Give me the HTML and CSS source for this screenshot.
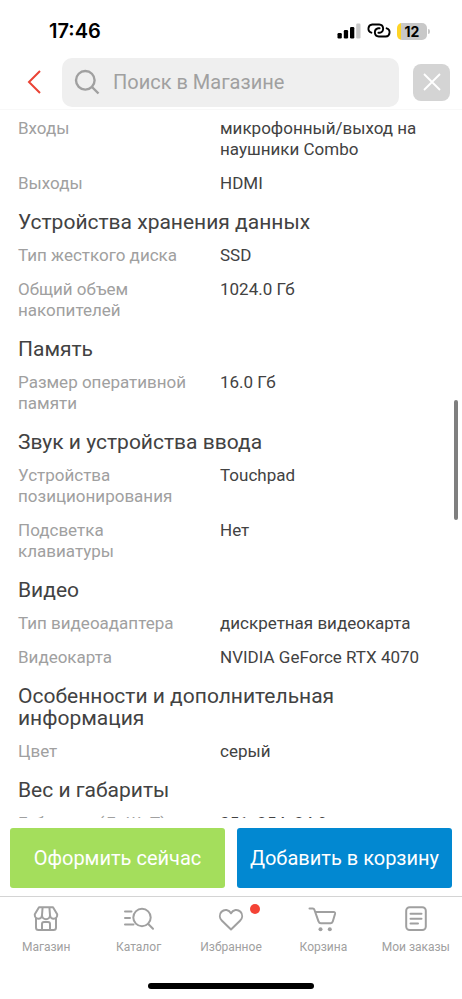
FILE: index.html
```html
<!DOCTYPE html>
<html lang="ru">
<head>
<meta charset="utf-8">
<meta name="viewport" content="width=device-width, initial-scale=1">
<title>Магазин</title>
<link rel="stylesheet" href="styles.css">
</head>
<body>
<div class="status">
  <span class="time">17:46</span>
  <div class="indicators">
    <svg width="24" height="16" viewBox="0 0 24 16" aria-hidden="true">
      <rect x="0.500" y="10" width="4.300" height="5.500" rx="1.200"/><rect x="6.800" y="7" width="4.300" height="8.500" rx="1.200"/><rect x="13" y="4" width="4.300" height="11.500" rx="1.200"/><rect x="19.200" y="0.500" width="4.300" height="15" rx="1.200" fill="#c8c8c8"/>
    </svg>
    <svg width="24" height="16" viewBox="0 0 24 16" fill="none" stroke="#000" stroke-width="1.900" stroke-linecap="round" aria-hidden="true">
      <path d="M4.400 9.700A4.200 4.200 0 0 1 5.300 1.500H12.200A4.200 4.200 0 0 1 12.800 9.800H11.400"/>
      <path d="M19.600 5.300A4.200 4.200 0 0 1 18.700 13.500H11.800A4.200 4.200 0 0 1 11.200 5.200H12.600"/>
    </svg>
    <div class="battery"><span class="level">12</span><span class="tip"></span></div>
  </div>
</div>
<header class="header">
  <button class="back" aria-label="Назад"><svg width="14" height="24" viewBox="0 0 14 24" fill="none" stroke="#ea4335" stroke-width="2"><path d="M13 1L2 12L13 23"/></svg></button>
  <label class="search">
    <svg width="26" height="26" viewBox="0 0 26 26" fill="none" stroke="#a0a0a0" stroke-width="2.400" aria-hidden="true"><circle cx="11.300" cy="11.300" r="9.300"/><path d="M18 18L24.500 24.500"/></svg>
    <input type="text" placeholder="Поиск в Магазине" aria-label="Поиск в Магазине">
  </label>
  <button class="close" aria-label="Закрыть"><svg width="18" height="18" viewBox="0 0 18 18" fill="none" stroke="#fff" stroke-width="1.800"><path d="M1 1L17 17M17 1L1 17"/></svg></button>
</header>
<main class="content">
  <dl class="specs">
    <div class="row"><dt>Входы</dt><dd>микрофонный/выход на наушники Combo</dd></div>
    <div class="row"><dt>Выходы</dt><dd>HDMI</dd></div>
  </dl>
  <h2>Устройства хранения данных</h2>
  <dl class="specs">
    <div class="row"><dt>Тип жесткого диска</dt><dd>SSD</dd></div>
    <div class="row"><dt>Общий объем накопителей</dt><dd>1024.0 Гб</dd></div>
  </dl>
  <h2>Память</h2>
  <dl class="specs">
    <div class="row"><dt>Размер оперативной памяти</dt><dd>16.0 Гб</dd></div>
  </dl>
  <h2>Звук и устройства ввода</h2>
  <dl class="specs">
    <div class="row"><dt>Устройства позиционирования</dt><dd>Touchpad</dd></div>
    <div class="row"><dt>Подсветка клавиатуры</dt><dd>Нет</dd></div>
  </dl>
  <h2>Видео</h2>
  <dl class="specs">
    <div class="row"><dt>Тип видеоадаптера</dt><dd>дискретная видеокарта</dd></div>
    <div class="row"><dt>Видеокарта</dt><dd>NVIDIA GeForce RTX 4070</dd></div>
  </dl>
  <h2>Особенности и дополнительная информация</h2>
  <dl class="specs">
    <div class="row"><dt>Цвет</dt><dd>серый</dd></div>
  </dl>
  <h2>Вес и габариты</h2>
  <dl class="specs">
    <div class="row"><dt>Габариты (ДхШхТ)</dt><dd>351x254x24.9</dd></div>
  </dl>
  <div class="thumb"></div>
</main>
<div class="actions">
  <button class="order">Оформить сейчас</button>
  <button class="add">Добавить в корзину</button>
</div>
<nav class="tabs">
  <a href="#"><svg viewBox="0 0 28 28" aria-hidden="true"><path d="M7 2.200H21L25.200 9.200V10A3.600 3.600 0 0 1 18 10.200A4 4 0 0 1 10 10.200A3.600 3.600 0 0 1 2.800 10V9.200ZM10.600 2.200L10 10.200M17.400 2.200L18 10.200M4 13V22.500Q4 25 6.500 25H21.500Q24 25 24 22.500V13M10 25V19Q10 17 12 17H16Q18 17 18 19V25"/></svg>Магазин</a>
  <a href="#"><svg viewBox="0 0 28 28" aria-hidden="true"><circle cx="17" cy="12.500" r="8.700"/><path d="M23 18.800L28 23.800M0 6.500H6.500M0 13H5M0 19.500H8.500"/></svg>Каталог</a>
  <a href="#"><svg viewBox="0 0 28 28" aria-hidden="true"><path d="M14 24.500L5 15.800C2.500 13.300 2 9.500 4.500 6.800C7.500 3.700 12 4.500 14 8.300C16 4.500 20.500 3.700 23.500 6.800C26 9.500 25.500 13.300 23 15.800Z"/></svg><span class="dot"></span>Избранное</a>
  <a href="#"><svg viewBox="0 0 28 28" aria-hidden="true"><path d="M0.500 3.500H3.800Q5 3.500 5.400 4.700L9.500 16.300Q10.200 18.300 12 18.300H21.500Q23 18.300 23.700 16.700L26 9Q26.500 7 24.500 7H6.200"/><g stroke="none" fill="#a0a0a0"><circle cx="11.500" cy="24.300" r="2"/><circle cx="20.800" cy="24.300" r="2"/></g></svg>Корзина</a>
  <a href="#"><svg viewBox="0 0 28 28" aria-hidden="true"><rect x="4.200" y="2.300" width="19.600" height="22.700" rx="3.500"/><path d="M8.500 8.800H19.500M8.500 13.700H19.500M8.500 18.500H16"/></svg>Мои заказы</a>
</nav>
<div class="home"></div>
</body>
</html>
```
FILE: styles.css
```css
* { box-sizing: border-box; }
body {
  margin: 0;
  height: 100vh;
  display: flex;
  flex-direction: column;
  background: #fff;
  color: #424242;
  font-family: Roboto, sans-serif;
  font-size: 17px;
  line-height: 21px;
}
button { border: 0; padding: 0; font: inherit; background: none; }
svg { display: block; flex: none; }
.status {
  display: flex;
  justify-content: space-between;
  align-items: center;
  height: 58px;
  padding: 4px 32px 0 49px;
  color: #000;
}
.time { font: 600 20px/24px Inter, sans-serif; }
.indicators { display: flex; align-items: center; gap: 6px; }
.battery { display: flex; align-items: center; gap: 1px; }
.level {
  width: 30px;
  border-radius: 5px;
  background: linear-gradient(90deg, #ffd426 4px, #c8c8c8 4px);
  font: 700 14px/17px Inter, sans-serif;
  text-align: center;
}
.tip { width: 2px; height: 5px; border-radius: 0 2px 2px 0; background: #c8c8c8; }
.header {
  display: flex;
  align-items: center;
  gap: 14px;
  height: 52px;
  padding: 0 12px 3px 20px;
  border-bottom: 1px solid #f8f8f8;
}
.back { width: 28px; height: 32px; display: grid; place-items: center; }
.search {
  flex: 1;
  min-width: 0;
  height: 49px;
  display: flex;
  align-items: center;
  gap: 13px;
  padding: 0 12px;
  border-radius: 10px;
  background: #efefef;
}
.search input {
  width: 100%;
  min-width: 0;
  padding: 0;
  border: 0;
  outline: 0;
  background: none;
  font: 20px/24px Roboto, sans-serif;
}
.search input::placeholder { color: #a0a0a0; opacity: 1; }
.close {
  width: 37px;
  height: 37px;
  display: grid;
  place-items: center;
  border-radius: 8px;
  background: #d4d4d4;
}
.content {
  position: relative;
  flex: 1;
  min-height: 0;
  overflow: hidden;
  padding: 8px 18px 0;
}
.specs { margin: 0; display: grid; gap: 13px; }
.row { display: grid; grid-template-columns: 180px 1fr; gap: 22px; }
dt { color: #a0a0a0; }
dd { margin: 0; }
h2 { margin: 17px 0 12px; font-size: 21px; font-weight: 400; line-height: 22px; }
.thumb {
  position: absolute;
  top: 290px;
  right: 4px;
  width: 4px;
  height: 120px;
  border-radius: 2px;
  background: #7f7f7f;
}
.actions { display: grid; grid-template-columns: 1fr 1fr; gap: 12px; padding: 10px 10px 8px; }
.actions button { height: 60px; border-radius: 3px; color: #fff; font-size: 20px; }
.actions .order { background: #a4de5c; }
.actions .add { background: #0288d1; }
.tabs { display: grid; grid-template-columns: repeat(5, 1fr); border-top: 1px solid #d4d4d4; }
.tabs a {
  position: relative;
  display: flex;
  flex-direction: column;
  align-items: center;
  gap: 6px;
  padding: 8px 0 0;
  color: #a0a0a0;
  font-size: 12px;
  line-height: 16px;
  text-decoration: none;
  white-space: nowrap;
}
.tabs svg { width: 28px; height: 28px; overflow: visible; fill: none; stroke: #a0a0a0; stroke-width: 2; stroke-linecap: round; stroke-linejoin: round; }
.dot { position: absolute; top: 7px; left: calc(50% + 19px); width: 10px; height: 10px; border-radius: 50%; background: #f44336; }
.home { align-self: center; width: 36%; height: 6px; margin: 28px 0 10px; border-radius: 3px; background: #000; }
```
